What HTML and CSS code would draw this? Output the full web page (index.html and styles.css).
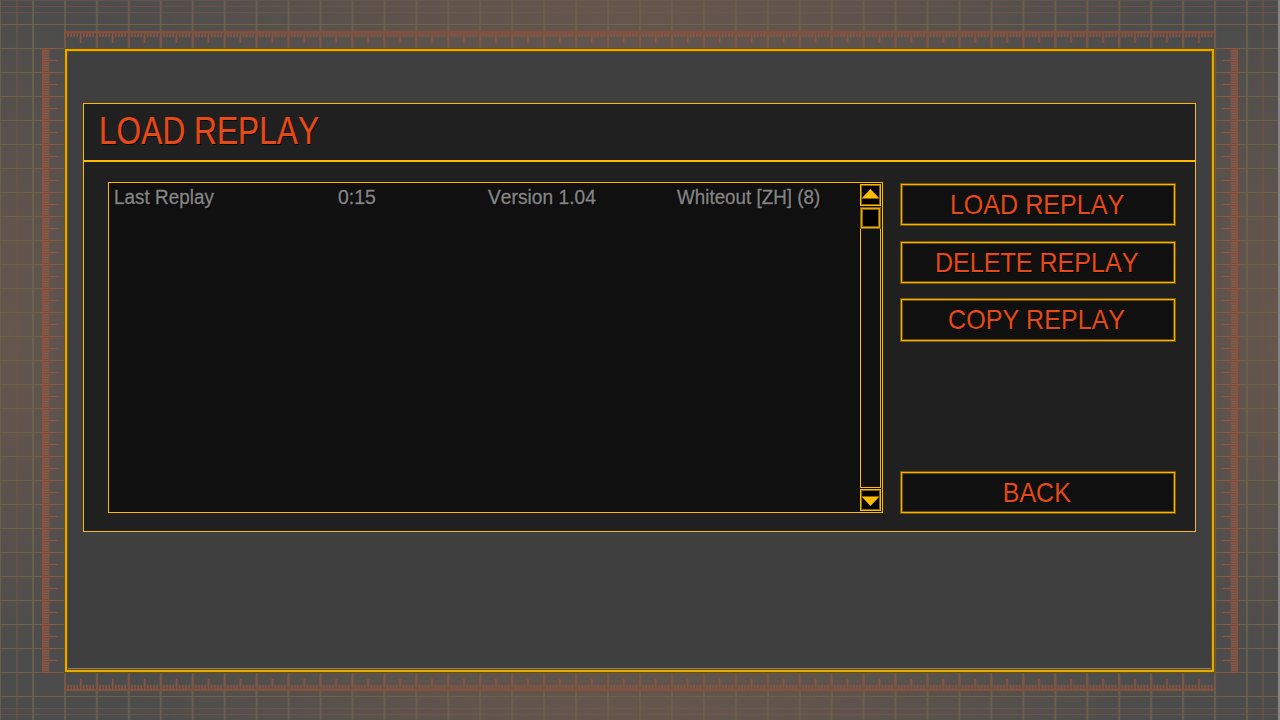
FILE: index.html
```html
<!DOCTYPE html>
<html lang="en">
<head>
<meta charset="utf-8">
<title>Load Replay</title>
<link rel="stylesheet" href="styles.css">
</head>
<body>
<svg class="backdrop" width="1280" height="720" viewBox="0 0 1280 720" aria-hidden="true">
  <defs>
    <radialGradient id="glow"><stop offset="0" stop-color="#65564d"/><stop offset=".4" stop-color="#65564d" stop-opacity=".75"/><stop offset="1" stop-color="#65564d" stop-opacity="0"/></radialGradient>
    <pattern id="cols" x="63.9" y="0" width="31.95" height="24" patternUnits="userSpaceOnUse"><rect width="2" height="24" fill="#71664b" fill-opacity=".7"/></pattern>
    <pattern id="rows" x="0" y="24" width="32" height="24" patternUnits="userSpaceOnUse"><rect width="32" height="1" fill="#736644" fill-opacity=".85"/></pattern>
    <pattern id="hticks" x="64" y="31" width="31.95" height="18" patternUnits="userSpaceOnUse">
      <path d="M.7 0V15" stroke="#8c513d" stroke-width="1.3"/>
      <path d="M16.6 0V12" stroke="#96553d" stroke-width="1.4"/>
      <path d="M4 0V6M7.1 0V6M10.2 0V6M13.3 0V6M19.8 0V6M22.9 0V6M26 0V6M29.2 0V6" stroke="#90553f" stroke-width="1.5"/>
      <path d="M0 1H32" stroke="#87503d" stroke-width="2"/>
    </pattern>
    <pattern id="vticks" x="42" y="48" width="16" height="12" patternUnits="userSpaceOnUse">
      <path d="M0 0H7.5V12H0Z" fill="#81503f" fill-opacity=".6"/>
      <path d="M0 .5H15.5" stroke="#9a533d"/>
      <path d="M1 3H7M1 5.4H7M1 7.8H7M1 10.2H7" stroke="#8d604e" stroke-width=".9"/>
      <path d="M.7 0V12" stroke="#944e39" stroke-width="1.4"/>
    </pattern>
  </defs>
  <rect width="1280" height="720" fill="#4c4c4c"/>
  <ellipse cx="640" cy="10" rx="550" ry="160" fill="url(#glow)"/>
  <ellipse cx="640" cy="710" rx="530" ry="130" fill="url(#glow)"/>
  <ellipse cx="0" cy="330" rx="160" ry="330" fill="url(#glow)"/>
  <ellipse cx="1280" cy="330" rx="160" ry="330" fill="url(#glow)"/>
  <rect x="63.9" width="1186" height="720" fill="url(#cols)"/>
  <path d="M0 0H1V720H0ZM32 0H34V720H32Z" fill="#71664b" fill-opacity=".7"/>
  <path d="M16 0H18V720H16ZM1262 0H1264V720H1262Z" fill="#6b5449" fill-opacity=".7"/>
  <rect y="24" width="1280" height="673" fill="url(#rows)"/>
  <path d="M0 .5H1280M0 6.5H1280M0 12.5H1280M0 708.5H1280M0 714.5H1280" stroke="#75564a" stroke-opacity=".65"/>
  <rect x="64" y="31" width="1151" height="16" fill="url(#hticks)"/>
  <g transform="translate(0 722) scale(1 -1)"><rect x="64" y="31" width="1151" height="16" fill="url(#hticks)"/></g>
  <rect x="42" y="48" width="16" height="625" fill="url(#vticks)"/>
  <g transform="translate(1280 0) scale(-1 1)"><rect x="42" y="48" width="16" height="625" fill="url(#vticks)"/></g>
  <rect x="1278" width="2" height="720" fill="#858585"/>
</svg>

<main class="frame">
  <section class="dialog">
    <header class="dialog-head"><h1 class="title">LOAD REPLAY</h1></header>
    <div class="dialog-body">
      <div class="list">
        <div class="row">
          <span class="cell">Last Replay</span>
          <span class="cell cell-time">0:15</span>
          <span class="cell cell-version">Version 1.04</span>
          <span class="cell cell-map">Whiteout [ZH] (8)</span>
        </div>
        <div class="scrollbar">
          <div class="arrow"><svg width="19" height="20"><path d="M9.5 4L18 13H1Z" fill="#ffbb08"/><path d="M1 13.5H18" stroke="#8b6500"/></svg></div>
          <div class="track"><div class="thumb"></div></div>
          <div class="arrow arrow-down"><svg width="19" height="20"><path d="M1 7H18L9.500 16Z" fill="#ffbb08"/><path d="M1 6.500H18" stroke="#8b6500"/></svg></div>
        </div>
      </div>
      <nav class="actions">
        <button class="btn"><span class="label">LOAD REPLAY</span></button>
        <button class="btn"><span class="label">DELETE REPLAY</span></button>
        <button class="btn btn-copy"><span class="label">COPY REPLAY</span></button>
        <button class="btn btn-back"><span class="label">BACK</span></button>
      </nav>
    </div>
  </section>
</main>
</body>
</html>
```

FILE: styles.css
```css
* { box-sizing: border-box; }
body {
  margin: 0;
  width: 1280px;
  height: 720px;
  overflow: hidden;
  padding: 48px 65px 47px 64px;
  font-family: "Liberation Sans", Arial, sans-serif;
}
.backdrop { position: absolute; inset: 0; z-index: -1; }
.frame {
  height: 625px;
  padding: 51px 15px 0 15px;
  background: linear-gradient(#808080, #808080) 0 100% / 100% 1px no-repeat, #3f3f3f;
  border: 4px solid #6e5000;
  outline: 2px solid #e5aa05;
  outline-offset: -3px;
}
.dialog {
  width: 1113px;
  height: 429px;
  border: 1px solid #f6b910;
  background: #202020;
}
.dialog-head {
  height: 58px;
  padding: 5px 0 0 15px;
  border-bottom: 2px solid #ffb900;
}
.title {
  margin: 0;
  font-size: 38.500px;
  line-height: 44px;
  font-weight: 400;
  white-space: nowrap;
  color: #e64a19;
  text-shadow: 1px 1px 0 #000;
  transform: scaleX(.823);
  transform-origin: left;
  font-kerning: none;
  -webkit-text-stroke: .2px #e64a19;
}
.dialog-body { display: flex; gap: 17px; padding: 20px 0 0 24px; }
.list {
  display: flex;
  justify-content: space-between;
  width: 775px;
  height: 331px;
  border: 1px solid #ffb900;
  background: #101010;
}
.row {
  display: grid;
  grid-template-columns: 224px 150px 189px 180px;
  height: 28px;
  padding-left: 5px;
  align-items: center;
}
.cell {
  font-size: 19.500px;
  line-height: 28px;
  white-space: nowrap;
  color: #858585;
  text-shadow: 1px 1px 0 #000;
  transform: scaleX(.97);
  transform-origin: left;
  font-kerning: none;
  -webkit-text-stroke: .3px #858585;
}
.cell-time { transform: scaleX(1); }
.cell-version { transform: scaleX(.985); }
.cell-map { transform: scaleX(.965); }
.scrollbar {
  display: flex;
  flex-direction: column;
  width: 22px;
  padding: 1px 1px 1px 0;
  flex: none;
}
.arrow {
  width: 21px;
  height: 22px;
  border: 1px solid #ffb900;
  background: #000;
  box-shadow: inset 0 0 0 1px #8b6500;
}
.arrow svg { display: block; }
.arrow-down { margin-top: 1px; }
.track {
  flex: 1;
  width: 21px;
  margin-top: 1px;
  border: 1px solid #ffb900;
  border-top: 0;
}
.thumb {
  width: 21px;
  height: 22px;
  margin-left: -1px;
  border: 1px solid #866200;
  outline: 1px solid #e5aa05;
  outline-offset: -2px;
  box-shadow: inset 0 0 0 2px #866200;
  background: #000;
}
.actions { display: flex; flex-direction: column; width: 276px; padding-top: 1px; }
.btn {
  height: 43px;
  margin: 0 0 15px;
  padding: 0 3px 2px 0;
  display: flex;
  justify-content: center;
  align-items: center;
  border: 1px solid #765700;
  border-radius: 0;
  outline: 1px solid #f8b300;
  outline-offset: -2px;
  box-shadow: inset 0 0 0 2px #654b05;
  background: #101010;
  font: 28.500px/32px "Liberation Sans", Arial, sans-serif;
  color: #e64a19;
}
.btn:nth-child(2) { margin-bottom: 14px; }
.btn-copy { height: 44px; }
.btn-back { margin-top: 114px; }
.label {
  white-space: nowrap;
  transform: scaleX(.88);
  text-shadow: 1px 1px 0 #000;
  font-kerning: none;
}
```
